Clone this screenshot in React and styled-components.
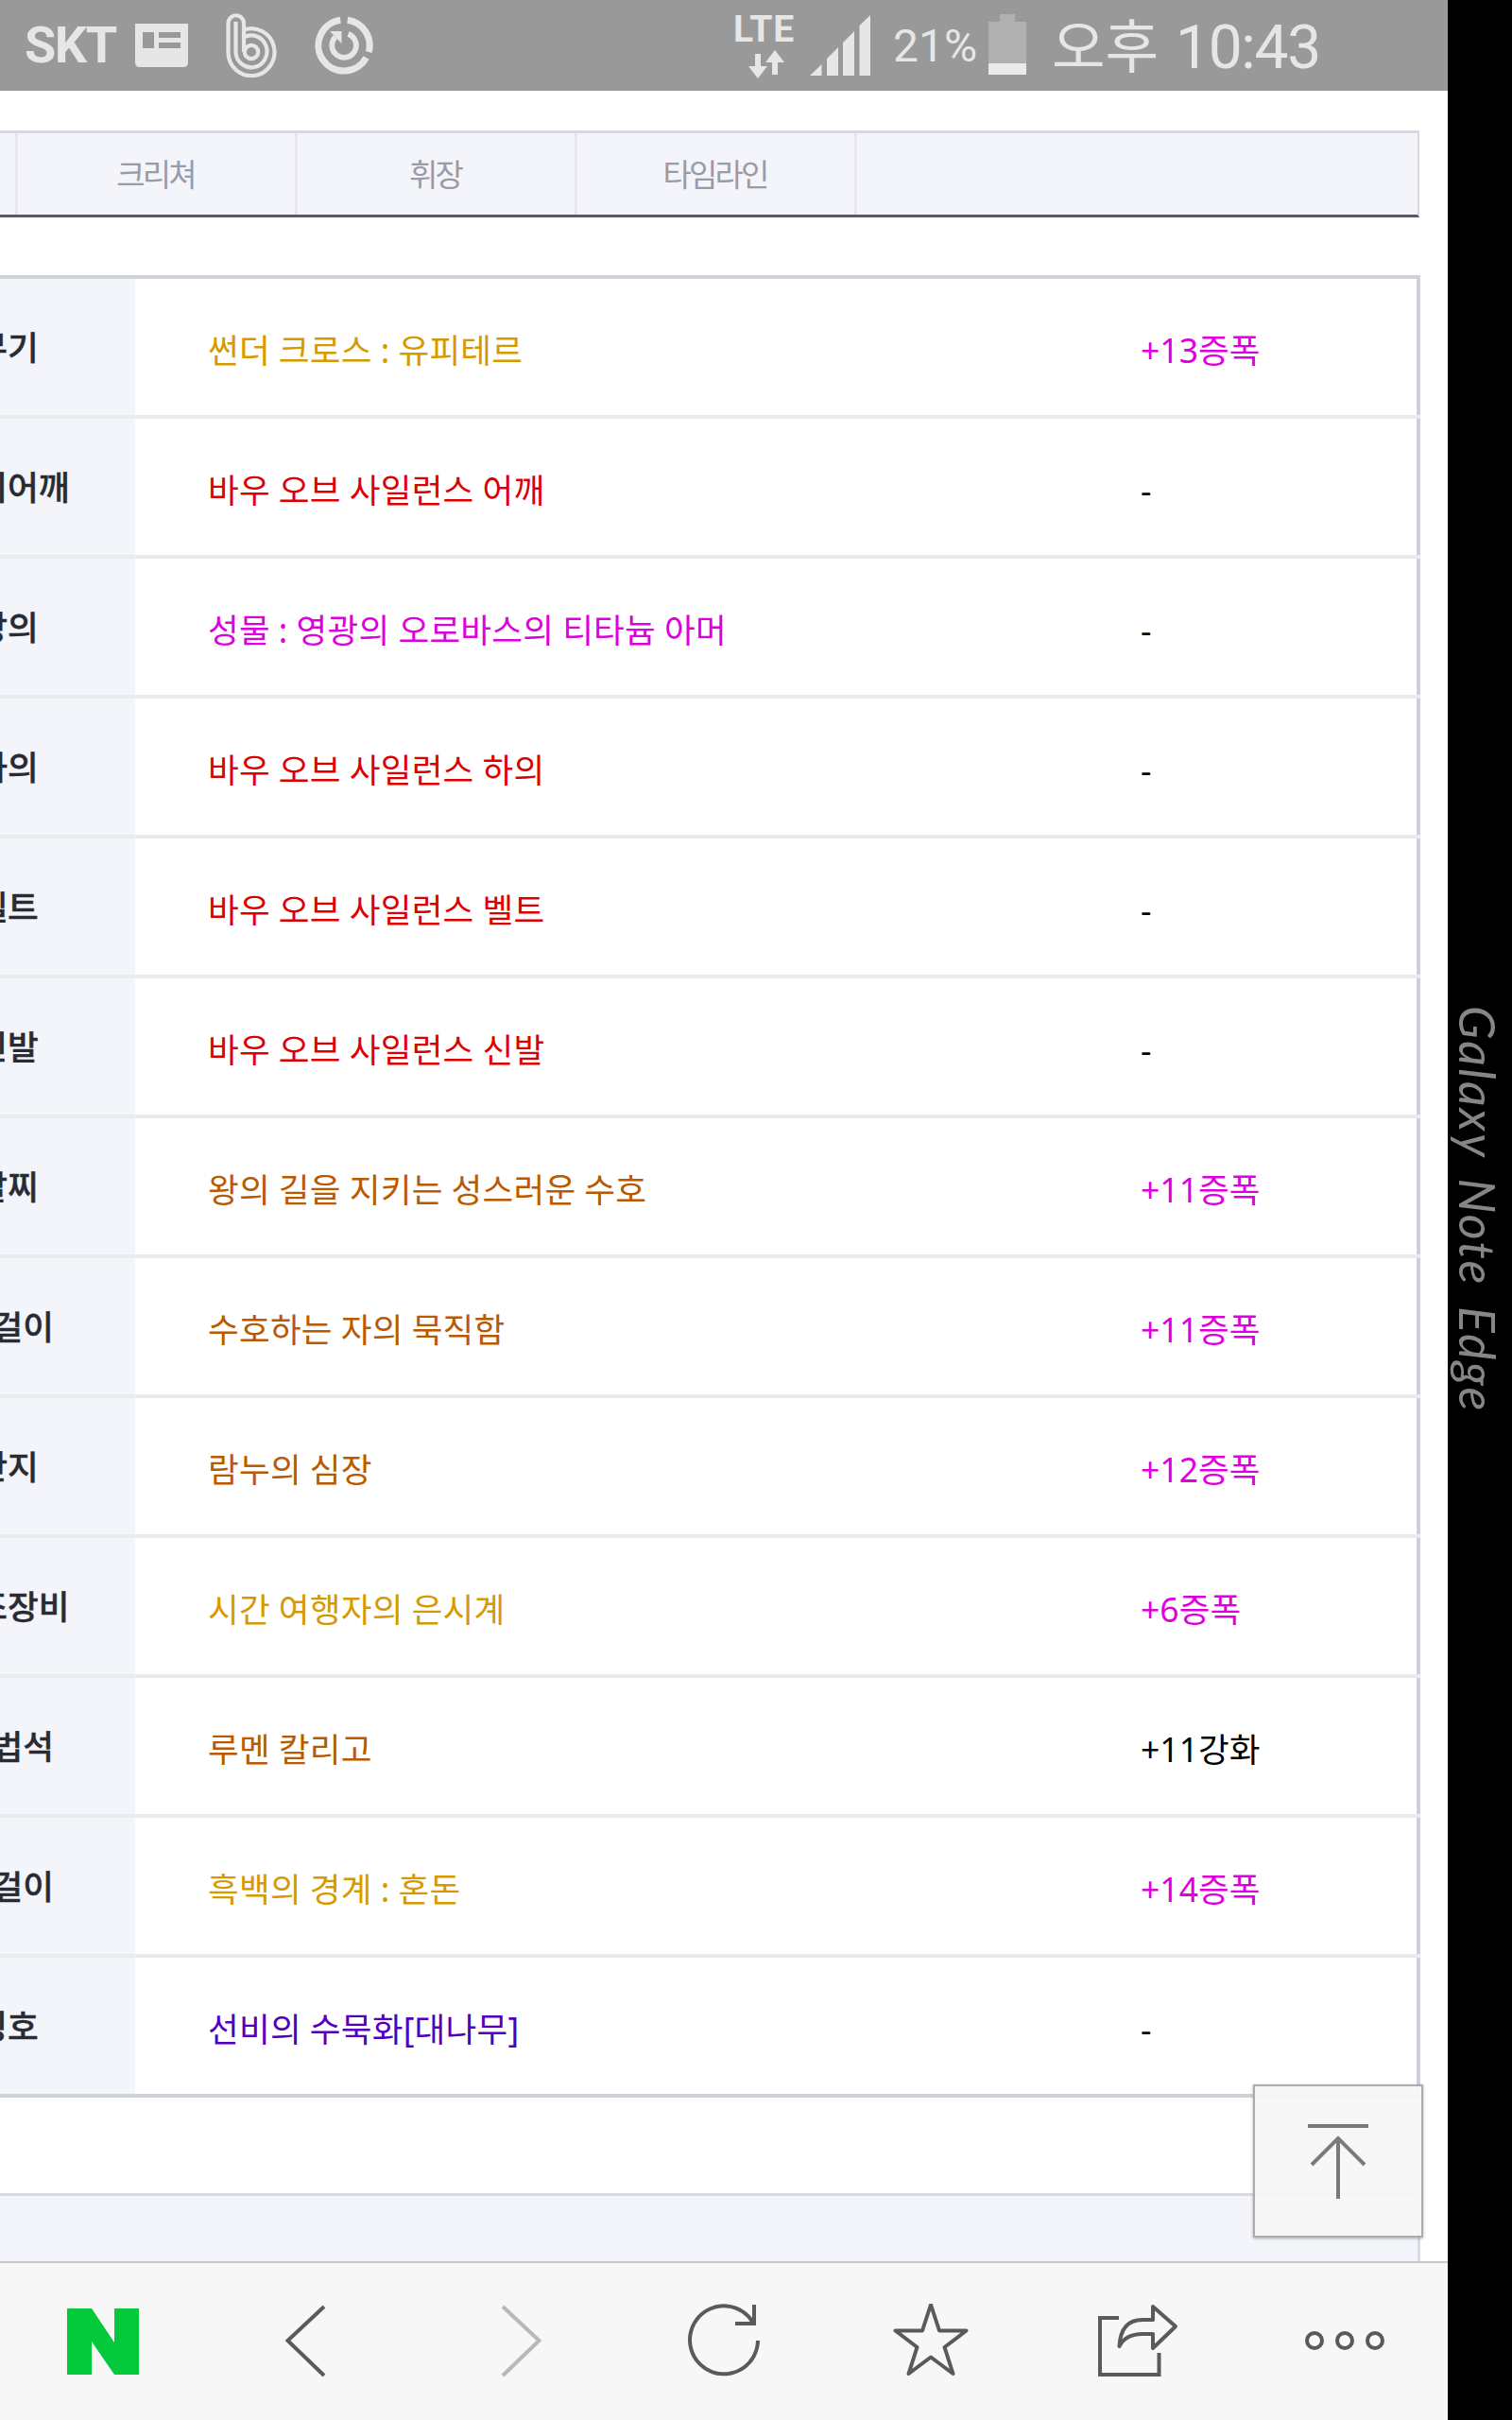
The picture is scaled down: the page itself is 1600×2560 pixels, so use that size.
import React from 'react'
import styled, { createGlobalStyle } from 'styled-components'

const GlobalStyle = createGlobalStyle`
  * {
    box-sizing: border-box;
  }
  body {
    margin: 0;
    background-color: #000;
    font-family: 'Noto Sans', 'Noto Sans CJK KR', sans-serif;
  }
`
const Device = styled.div`
  display: flex;
  width: 1600px;
  height: 2560px;
  overflow: hidden;
  background-color: #000;
`
const Screen = styled.div`
  display: flex;
  flex-direction: column;
  width: 1532px;
  height: 100%;
  position: relative;
  background-color: #fff;
`
const Edge = styled.div`
  width: 68px;
  padding: 1064px 4px 0 0;
  display: flex;
  justify-content: center;
`
const EdgeText = styled.span`
  writing-mode: vertical-rl;
  font-family: Lato, sans-serif;
  font-style: italic;
  font-size: 52px;
  line-height: 64px;
  letter-spacing: 2.2px;
  word-spacing: 7px;
  white-space: nowrap;
  color: #868686;
`

const StatusBar = styled.div`
  height: 96px;
  flex: none;
  display: flex;
  align-items: center;
  background-color: #999;
  color: #e6e6e6;
  font-family: Roboto, 'Noto Sans CJK KR', sans-serif;
  white-space: nowrap;
  svg {
    flex: none;
  }
`
const Carrier = styled.div`
  width: 117px;
  margin-left: 26px;
  font-size: 54px;
  font-weight: 700;
  line-height: 96px;
  letter-spacing: -1.4px;
`
const Notices = styled.div`
  display: flex;
  align-items: center;
  gap: 39px;
  width: 633px;
`
const Network = styled.div`
  width: 81px;
  height: 96px;
  padding-top: 13px;
  display: flex;
  flex-direction: column;
`
const NetworkType = styled.div`
  font-size: 39px;
  font-weight: 700;
  line-height: 36px;
  letter-spacing: 0.6px;
`
const NetworkArrows = styled.svg`
  margin: 4px 0 0 16px;
`
const Percent = styled.div`
  width: 101px;
  margin-left: 24px;
  padding-top: 2px;
  font-size: 48px;
  line-height: 94px;
`
const Clock = styled.div`
  display: flex;
  align-items: center;
  margin-left: 27px;
  padding-top: 6px;
  line-height: 90px;
`
const Meridiem = styled.span`
  width: 131px;
  font-size: 61.5px;
`
const Time = styled.span`
  font-size: 64px;
  letter-spacing: -1.3px;
`

const Content = styled.div`
  flex: 1;
  min-height: 0;
  width: 1503px;
  padding-top: 42px;
  display: flex;
  flex-direction: column;
  overflow: hidden;
`
const TabBar = styled.div`
  display: flex;
  flex: none;
  height: 92px;
  background-color: #f4f5fa;
  border-top: 3px solid #d8d9df;
  border-right: 2px solid #d8d9df;
  border-bottom: 3px solid #555b6f;
  margin-right: 1px;
`
const Tab = styled.div`
  width: ${(props) => props.$width || 296}px;
  padding: 2px 2px 0 0;
  border-right: 3px solid #e7e7ed;
  text-align: center;
  font-size: 33px;
  line-height: 84px;
  letter-spacing: -2.9px;
  color: #9b9ba8;
`
const Table = styled.div`
  flex: none;
  margin-top: 61px;
  border-top: 4px solid #cfd2d9;
`
const Row = styled.div`
  display: flex;
  height: 148px;
  font-size: 35.6px;
  line-height: 140px;
  white-space: nowrap;
  border-bottom: 4px solid ${(props) => (props.$last ? '#cfd2d9' : '#eaebef')};
`
// the first column is scrolled half out of the screen
const Slot = styled.div`
  width: 272px;
  margin-left: -129px;
  padding: 2px 0 0 2px;
  text-align: center;
  font-weight: 500;
  -webkit-text-stroke: 0.4px #292b33;
  color: #292b33;
  background-color: #f4f5fa;
`
const Item = styled.div`
  width: 1064px;
  padding: 5px 0 0 77px;
  letter-spacing: 0.22px;
  word-spacing: -0.5px;
  color: ${(props) => props.color};
`
const Value = styled.div`
  flex: 1;
  padding-top: 5px;
  border-right: 4px solid #cdd0d8;
  color: ${(props) => props.color};
`
const NextBox = styled.div`
  flex: 1;
  margin-top: 101px;
  background-color: #f4f5fa;
  border-top: 3px solid #d9dae2;
  border-right: 3px solid #d9dae2;
`
const TopButton = styled.button`
  position: absolute;
  right: 26px;
  bottom: 193px;
  width: 180px;
  height: 162px;
  padding: 0;
  display: flex;
  align-items: center;
  justify-content: center;
  border: 2px solid #acacac;
  background-color: rgba(247, 247, 247, 0.95);
  box-shadow: 0 1px 3px rgba(0, 0, 0, 0.3);
`
const Toolbar = styled.div`
  height: 168px;
  flex: none;
  display: flex;
  background-color: #f7f7f7;
  border-top: 2px solid #c6cbca;
`
const Tool = styled.div`
  flex: 1;
  display: flex;
  align-items: center;
  justify-content: center;
`

const GOLD = '#d69a00'
const RED = '#de0000'
const PINK = '#de00de'
const BROWN = '#bb5900'
const PURPLE = '#5200bd'
const BLACK = '#000'

const rows = [
  { slot: '무기', item: '썬더 크로스 : 유피테르', color: GOLD, value: '+13증폭' },
  { slot: '머리어깨', item: '바우 오브 사일런스 어깨', color: RED, value: '-' },
  { slot: '상의', item: '성물 : 영광의 오로바스의 티타늄 아머', color: PINK, value: '-' },
  { slot: '하의', item: '바우 오브 사일런스 하의', color: RED, value: '-' },
  { slot: '벨트', item: '바우 오브 사일런스 벨트', color: RED, value: '-' },
  { slot: '신발', item: '바우 오브 사일런스 신발', color: RED, value: '-' },
  { slot: '팔찌', item: '왕의 길을 지키는 성스러운 수호', color: BROWN, value: '+11증폭' },
  { slot: '목걸이', item: '수호하는 자의 묵직함', color: BROWN, value: '+11증폭' },
  { slot: '반지', item: '람누의 심장', color: BROWN, value: '+12증폭' },
  { slot: '보조장비', item: '시간 여행자의 은시계', color: GOLD, value: '+6증폭' },
  { slot: '마법석', item: '루멘 칼리고', color: BROWN, value: '+11강화' },
  { slot: '귀걸이', item: '흑백의 경계 : 혼돈', color: GOLD, value: '+14증폭' },
  { slot: '칭호', item: '선비의 수묵화[대나무]', color: PURPLE, value: '-' },
]

function Status() {
  return (
    <StatusBar>
      <Carrier>SKT</Carrier>
      <Notices>
        <svg width="56" height="46" fill="#e6e6e6">
          <path
            fillRule="evenodd"
            d="M0 0H56V41Q56 46 51 46H5Q0 46 0 41ZM8 9V26H20V9ZM25 9V15H48V9ZM25 20V26H48V20Z"
          />
        </svg>
        <svg width="56" height="68" fill="none" stroke="#e6e6e6" strokeWidth="4.2">
          <path d="M20 41V10.500A8.200 8.200 0 0 0 3.500 10.500V41A24.500 25 0 1 0 20 17.500" />
          <path d="M11.500 9V41A16.500 17 0 1 0 20 25.500" />
          <circle cx="28" cy="41" r="7.200" />
        </svg>
        <svg width="62" height="62" fill="none" stroke="#e6e6e6">
          <path d="M34.7 4.3A27 27 0 0 1 57.2 38" strokeWidth="7" />
          <path d="M54.6 44A27 27 0 1 1 27.3 4.3" strokeWidth="7" />
          <path d="M35.5 19A12.8 12.8 0 1 1 22 22" strokeWidth="5.8" />
          <path d="M16 16H28.5V29Z" fill="#e6e6e6" stroke="none" />
        </svg>
      </Notices>
      <Network>
        <NetworkType>LTE</NetworkType>
        <NetworkArrows width="38" height="30" fill="#e6e6e6">
          <path d="M7 4H13V17H20L10 30L0 17H7Z" />
          <path d="M28 0L38 13H31V26H25V13H18Z" />
        </NetworkArrows>
      </Network>
      <svg width="64" height="64" fill="#e6e6e6">
        <path d="M0 64L12.5 52V64ZM18 64V46L30 34V64ZM35 64V29L47 17V64ZM52.500 64V11L64 0V64Z" />
      </svg>
      <Percent>21%</Percent>
      <svg width="40" height="66">
        <path d="M12 0H28V8H40V52H0V8H12Z" fill="#b0b0b0" />
        <path d="M0 52H40V64H0Z" fill="#eaeaea" />
      </svg>
      <Clock>
        <Meridiem>오후</Meridiem>
        <Time>10:43</Time>
      </Clock>
    </StatusBar>
  )
}

function BottomBar() {
  const line = { fill: 'none', stroke: '#5a5a5a', strokeWidth: 4 }
  return (
    <Toolbar>
      <Tool>
        <svg width="78" height="80">
          <path
            fill="#03c93b"
            d="M1 5H27L51 41V5H77V75H51L27 40V75H1Z"
          />
        </svg>
      </Tool>
      <Tool>
        <svg width="80" height="80" {...line}>
          <path d="M55 3L16.500 39L55 76" />
        </svg>
      </Tool>
      <Tool>
        <svg width="80" height="80" {...line} stroke="#b8b8b8">
          <path d="M25 3L63.500 39L25 76" />
        </svg>
      </Tool>
      <Tool>
        <svg width="80" height="80" {...line}>
          <path d="M76 39A36 36 0 1 1 71 20" />
          <path d="M72 1V21H52" />
        </svg>
      </Tool>
      <Tool>
        <svg width="84" height="80" {...line} strokeLinejoin="round">
          <path d="M42 1L51 28.500H79.500L56.500 46L65.500 74L42 56.500L18.500 74L27.500 46L4.500 28.500H33Z" />
        </svg>
      </Tool>
      <Tool>
        <svg width="88" height="80" {...line}>
          <path d="M24 15H4V75H66.500V52" />
          <path d="M60 3L84 24L60 47V32H49Q31 32 24.500 45Q26 17 49 17H60Z" strokeLinejoin="round" />
        </svg>
      </Tool>
      <Tool>
        <svg width="84" height="22" {...line}>
          <circle cx="10" cy="10" r="8" />
          <circle cx="42" cy="10" r="8" />
          <circle cx="74" cy="10" r="8" />
        </svg>
      </Tool>
    </Toolbar>
  )
}

function App() {
  return (
    <Device>
      <GlobalStyle />
      <Screen>
        <Status />
        <Content>
          <TabBar>
            <Tab $width={19} />
            <Tab>크리쳐</Tab>
            <Tab>휘장</Tab>
            <Tab>타임라인</Tab>
          </TabBar>
          <Table>
            {rows.map((row, i) => (
              <Row key={row.slot} $last={i === rows.length - 1}>
                <Slot>{row.slot}</Slot>
                <Item color={row.color}>{row.item}</Item>
                <Value color={row.value.includes('증폭') ? PINK : BLACK}>{row.value}</Value>
              </Row>
            ))}
          </Table>
          <NextBox />
        </Content>
        <BottomBar />
        <TopButton>
          <svg width="64" height="80" fill="none" stroke="#7a7a7a" strokeWidth="4">
            <path d="M0 3H64" />
            <path d="M32 16V80M4 44L32 16L60 44" />
          </svg>
        </TopButton>
      </Screen>
      <Edge>
        <EdgeText>Galaxy Note Edge</EdgeText>
      </Edge>
    </Device>
  )
}

export default App
